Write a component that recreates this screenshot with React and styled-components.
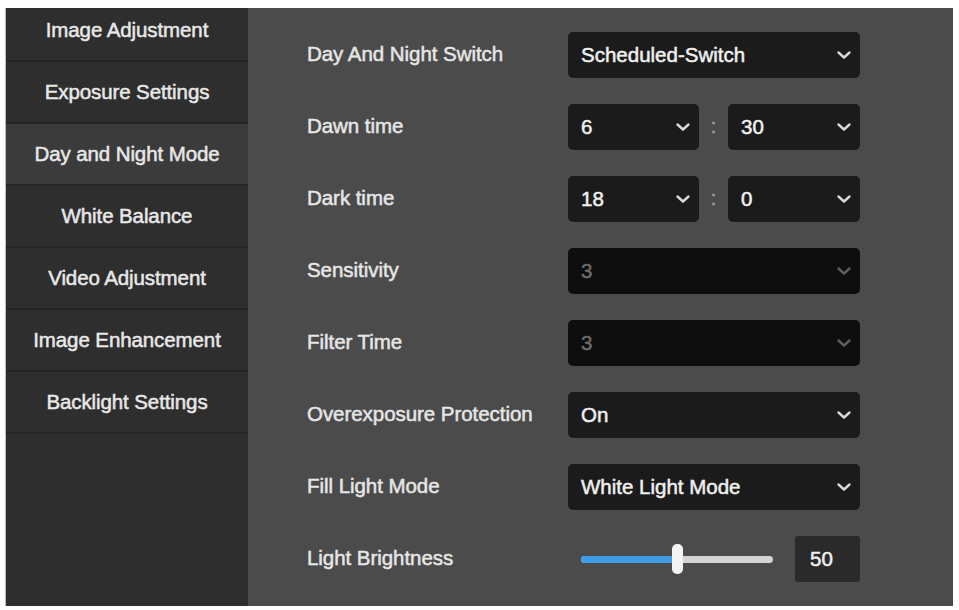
import React from "react";
import styled, { createGlobalStyle } from "styled-components";

const Global = createGlobalStyle`
  html, body { margin: 0; padding: 0; background: #ffffff; }
  body { font-family: "Liberation Sans", Arial, sans-serif; }
`;

const Frame = styled.div`
  margin: 8px 0 0 5px;
  width: 948px;
  height: 598px;
  display: flex;
  background: #4b4b4b;
  overflow: hidden;
  border-left: 1px solid #bdbdbd;
  box-sizing: border-box;
`;

const Sidebar = styled.nav`
  width: 242px;
  flex: none;
  background: #2e2e2e;
  display: flex;
  flex-direction: column;
  overflow: hidden;
`;

const NavItem = styled.div`
  height: 60px;
  flex: none;
  margin-top: ${(p) => (p.$first ? "-8px" : "0")};
  border-bottom: 2px solid #242424;
  background: ${(p) => (p.$active ? "#3b3b3b" : "#2e2e2e")};
  display: flex;
  align-items: center;
  justify-content: center;
  color: #e8e8e8;
  font-size: 20.5px;
  letter-spacing: -0.1px;
  -webkit-text-stroke: 0.5px #e8e8e8;
  white-space: nowrap;
`;

const Main = styled.main`
  flex: 1;
  padding: 24px 0 0 59px;
  display: grid;
  grid-template-columns: 261px 292px;
  grid-auto-rows: 46px;
  row-gap: 26px;
  align-content: start;
`;

const Label = styled.div`
  display: flex;
  align-items: center;
  color: #e6e6e6;
  font-size: 20.5px;
  letter-spacing: -0.05px;
  -webkit-text-stroke: 0.5px #e6e6e6;
  white-space: nowrap;
  padding-bottom: 3px;
`;

const SelectBox = styled.div`
  width: ${(p) => p.$w || "292px"};
  height: 46px;
  box-sizing: border-box;
  border-radius: 5px;
  background: ${(p) => (p.$disabled ? "#0e0e0e" : "#1b1b1b")};
  color: ${(p) => (p.$disabled ? "#6c6c6c" : "#f0f0f0")};
  -webkit-text-stroke: 0.5px ${(p) => (p.$disabled ? "#6c6c6c" : "#f0f0f0")};
  display: flex;
  align-items: center;
  justify-content: space-between;
  padding: 0 8px 0 13px;
  font-size: 20.5px;
  white-space: nowrap;
`;

const TimeRow = styled.div`
  display: flex;
  align-items: center;
`;

const Colon = styled.span`
  width: 29px;
  text-align: center;
  color: #9a9a9a;
  -webkit-text-stroke: 0.6px #9a9a9a;
  font-size: 20px;
  padding-bottom: 2px;
`;

const SliderRow = styled.div`
  display: flex;
  align-items: center;
  padding-left: 13px;
  gap: 22px;
`;

const Track = styled.div`
  position: relative;
  width: 192px;
  height: 7px;
  border-radius: 4px;
  background: #d4d4d4;
`;

const Fill = styled.div`
  height: 100%;
  border-radius: 4px;
  background: #3e9be6;
`;

const Thumb = styled.div`
  position: absolute;
  top: 50%;
  width: 11px;
  height: 30px;
  margin-left: -5px;
  transform: translateY(-50%);
  border-radius: 5px;
  background: #f4f4f4;
`;

const ValueBox = styled.div`
  width: 65px;
  height: 46px;
  box-sizing: border-box;
  border-radius: 3px;
  background: #2a2a2a;
  color: #f0f0f0;
  -webkit-text-stroke: 0.5px #f0f0f0;
  font-size: 20.5px;
  display: flex;
  align-items: center;
  padding-left: 15px;
`;

const Chevron = ({ dim }) => (
  <svg width="16" height="10" viewBox="0 0 16 10" aria-hidden="true">
    <path
      d="M2.5 2.5 L8 7.5 L13.5 2.5"
      fill="none"
      stroke={dim ? "#5e5e5e" : "#d9d9d9"}
      strokeWidth="2.4"
      strokeLinecap="round"
      strokeLinejoin="round"
    />
  </svg>
);

const Select = ({ value, disabled, w }) => (
  <SelectBox $disabled={disabled} $w={w}>
    <span>{value}</span>
    <Chevron dim={disabled} />
  </SelectBox>
);

const nav = [
  "Image Adjustment",
  "Exposure Settings",
  "Day and Night Mode",
  "White Balance",
  "Video Adjustment",
  "Image Enhancement",
  "Backlight Settings",
];

export default function App() {
  const brightness = 50;
  return (
    <>
      <Global />
      <Frame>
        <Sidebar>
          {nav.map((n, i) => (
            <NavItem key={n} $first={i === 0} $active={n === "Day and Night Mode"}>
              {n}
            </NavItem>
          ))}
        </Sidebar>
        <Main>
          <Label>Day And Night Switch</Label>
          <Select value="Scheduled-Switch" />

          <Label>Dawn time</Label>
          <TimeRow>
            <Select value="6" w="131px" />
            <Colon>:</Colon>
            <Select value="30" w="132px" />
          </TimeRow>

          <Label>Dark time</Label>
          <TimeRow>
            <Select value="18" w="131px" />
            <Colon>:</Colon>
            <Select value="0" w="132px" />
          </TimeRow>

          <Label>Sensitivity</Label>
          <Select value="3" disabled />

          <Label>Filter Time</Label>
          <Select value="3" disabled />

          <Label>Overexposure Protection</Label>
          <Select value="On" />

          <Label>Fill Light Mode</Label>
          <Select value="White Light Mode" />

          <Label>Light Brightness</Label>
          <SliderRow>
            <Track>
              <Fill style={{ width: `${brightness}%` }} />
              <Thumb style={{ left: `${brightness}%` }} />
            </Track>
            <ValueBox>{brightness}</ValueBox>
          </SliderRow>
        </Main>
      </Frame>
    </>
  );
}
